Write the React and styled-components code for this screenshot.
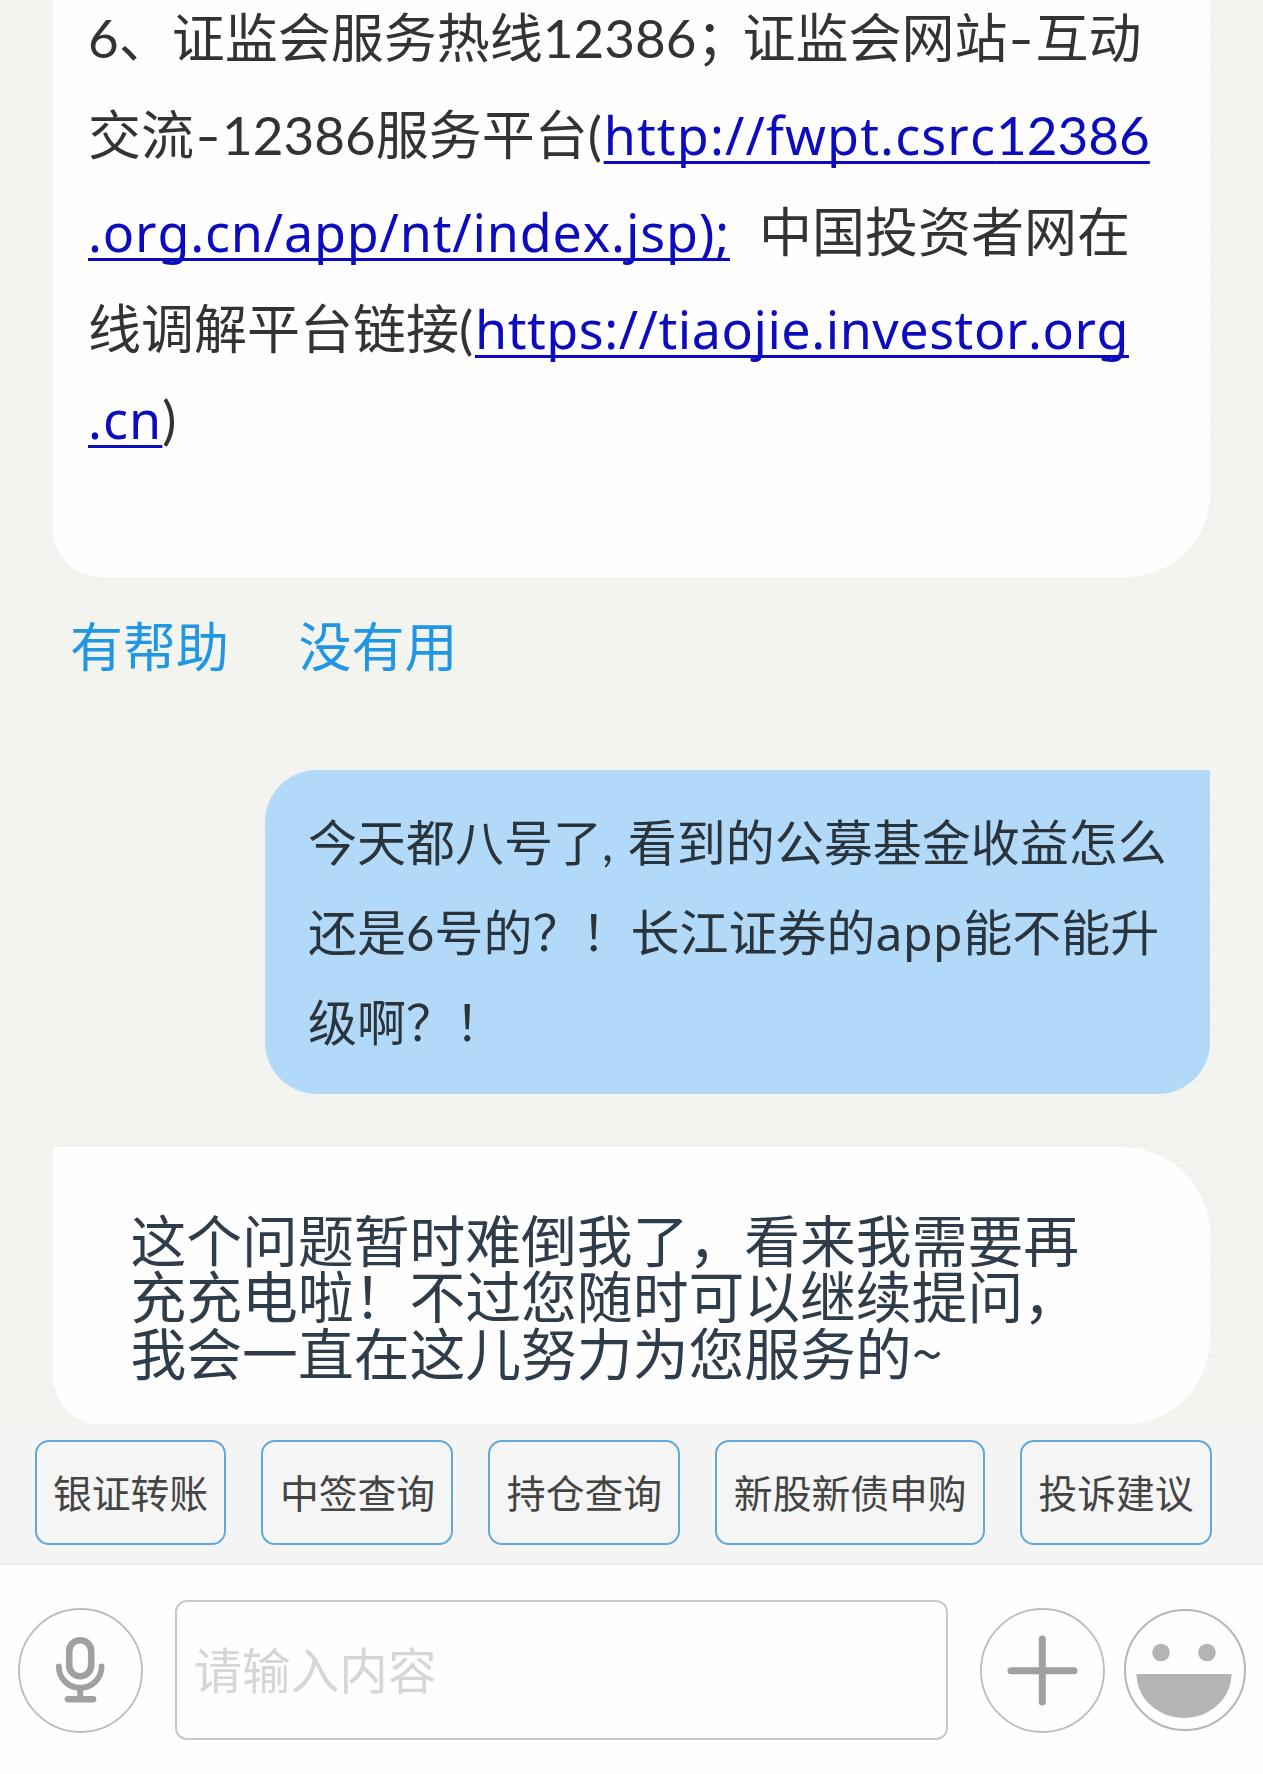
import React from "react";
import styled, { createGlobalStyle } from "styled-components";

const GlobalStyle = createGlobalStyle`
  * { box-sizing: border-box; }
  body {
    margin: 0;
    background: #fefefe;
    font-family: "Lato", "Noto Sans CJK SC", sans-serif;
    font-variant-ligatures: none;
    font-kerning: none;
    text-spacing-trim: space-all;
  }
`;

const Page = styled.div`
  display: flex;
  flex-direction: column;
  width: 1263px;
  height: 1774px;
  overflow: hidden;
`;

const Chat = styled.main`
  display: flex;
  flex-direction: column;
  flex: 0 0 1424px;
  padding: 0 53px;
  overflow: hidden;
  background:
    repeating-linear-gradient(180deg, rgba(255, 255, 255, 0.14) 0 2px, transparent 3px 7px),
    repeating-linear-gradient(180deg, rgba(222, 225, 212, 0.1) 0 1px, transparent 2px 5px),
    #f3f4ef;
`;

const Bubble = styled.section`
  color: #333;
  background: #fefefe;
  white-space: nowrap;
`;

const AnswerBubble = styled(Bubble)`
  flex: 0 0 588px;
  margin-top: -11px;
  padding-left: 35px;
  border-radius: 0 0 84px 48px;
  font-size: 53px;
`;

const QuestionBubble = styled(Bubble)`
  align-self: flex-end;
  width: 945px;
  flex: 0 0 324px;
  margin-top: 99px;
  padding: 27px 0 0 43px;
  border-radius: 52px 0 52px 52px;
  color: #2a343c;
  background: #b3d9f8;
  font-size: 49px;
`;

const FallbackBubble = styled(Bubble)`
  flex: 0 0 278px;
  margin-top: 53px;
  padding: 63px 0 0 77.5px;
  border-radius: 0 88px 88px 50px;
  color: #2f3c49;
  font-family: "Noto Sans CJK SC", sans-serif;
  font-size: 55.8px;
`;

const Line = styled.div`
  height: ${(p) => p.$height}px;
  line-height: ${(p) => p.$height}px;
`;

const Track = styled.span`
  letter-spacing: ${(p) => p.$by}px;
`;

const Latin = styled.span`
  font-family: "Noto Sans", sans-serif;
  font-size: 0.98em;
  line-height: 1;
  letter-spacing: 0.6px;
`;

const LinkDigits = styled.span`
  font-family: "Lato", sans-serif;
  font-size: 53px;
  letter-spacing: 0;
`;

const Dash = styled.span`
  display: inline-block;
  width: 28px;
  text-align: center;
  transform: scaleX(1.3);
`;

const Link = styled.a`
  color: #0c0cbe;
  font-family: "Noto Sans", sans-serif;
  font-size: 52px;
  line-height: 1;
  letter-spacing: ${(p) => p.$by}px;
  text-decoration: underline;
  text-decoration-thickness: 2.5px;
  text-decoration-skip-ink: none;
  text-underline-offset: 6px;
  margin-right: ${(p) => p.$after || 0}px;
`;

const Feedback = styled.div`
  display: flex;
  gap: 69.5px;
  margin-top: 41px;
  padding-left: 17px;
`;

const FeedbackButton = styled.button`
  padding: 0;
  border: 0;
  background: none;
  color: #2196e3;
  font: 53px/53px "Noto Sans CJK SC", sans-serif;
`;

const QuickBar = styled.nav`
  display: flex;
  gap: 35px;
  flex: 0 0 141px;
  padding: 16px 0 0 34.5px;
  border-bottom: 1px solid #e9e9e9;
  background: #f4f4f4;
`;

const QuickButton = styled.button`
  flex: 0 0 auto;
  height: 105px;
  padding: 0 16.4px 4px;
  border: 2px solid #63a8dc;
  border-radius: 14px;
  background: #f5f5f5;
  color: #444;
  font: 38.8px/96px "Noto Sans CJK SC", sans-serif;
  white-space: nowrap;
`;

const Composer = styled.footer`
  display: flex;
  align-items: center;
  flex: 1;
  padding: 1px 17px 0 18px;
  background: #fefefe;
`;

const Input = styled.input`
  width: 774px;
  height: 140px;
  margin: 0 32px 0 31.5px;
  padding: 0 17px 4px;
  border: 2px solid #c8c8c8;
  border-radius: 12px;
  background: #fefefe;
  font: 400 48.6px/70px "Noto Sans CJK SC", sans-serif;
  &::placeholder {
    color: #d6d6d6;
    opacity: 1;
  }
`;

const IconButton = styled.button`
  display: flex;
  flex: 0 0 auto;
  margin: 0 ${(p) => p.$after || 0}px 0 0;
  padding: 0;
  border: 0;
  background: none;
`;

const MicIcon = () => (
  <svg width="125" height="125" viewBox="0 0 125 125" fill="none">
    <circle cx="62.5" cy="62.5" r="61.5" stroke="#bcbcbc" strokeWidth="1.8" />
    <g stroke="#a0a0a0" strokeLinecap="round">
      <rect x="51.2" y="32.2" width="22" height="36" rx="11" strokeWidth="6.6" />
      <path d="M40.8 58.5a21.4 21.4 0 0 0 42.8 0" strokeWidth="5.8" />
      <path d="M62.2 81v9" strokeWidth="6" strokeLinecap="butt" />
      <path d="M50 91.2h25" strokeWidth="6.6" />
    </g>
  </svg>
);

const PlusIcon = () => (
  <svg width="125" height="125" viewBox="0 0 125 125" fill="none">
    <circle cx="62.5" cy="62.5" r="61.5" stroke="#bcbcbc" strokeWidth="1.8" />
    <path d="M62.3 31v63M31 62.7h63" stroke="#a0a0a0" strokeWidth="7" strokeLinecap="round" />
  </svg>
);

const SmileIcon = () => (
  <svg width="122" height="122" viewBox="0 0 122 122" fill="none">
    <circle cx="61" cy="61" r="60" stroke="#b6b6b6" strokeWidth="2" />
    <g fill="#b4b4b4">
      <circle cx="37" cy="43.5" r="8.8" />
      <circle cx="83" cy="43.5" r="8.8" />
      <path d="M12.5 65h95a47.5 44 0 0 1-95 0z" />
    </g>
  </svg>
);

const quickActions = ["银证转账", "中签查询", "持仓查询", "新股新债申购", "投诉建议"];

export default function App() {
  return (
    <Page>
      <GlobalStyle />
      <Chat>
        <AnswerBubble>
          <Line $height={97}>
            6、证监会服务热线12386<Track $by={-7}>；</Track>证监会网站<Dash>-</Dash>互动
          </Line>
          <Line $height={97}>
            交流<Dash>-</Dash>12386服务平台<Track $by={1.8}>(</Track>
            <Link $by={1.15}>http://fwpt.csrc<LinkDigits>12386</LinkDigits></Link>
          </Line>
          <Line $height={97}>
            <Link $by={0.84} $after={29}>.org.cn/app/nt/index.jsp);</Link>中国投资者网在
          </Line>
          <Line $height={97}>
            线调解平台链接<Track $by={1.8}>(</Track>
            <Link $by={0.54}>https://tiaojie.investor.org</Link>
          </Line>
          <Line $height={83}>
            <Link $by={1.1}>.cn</Link>)
          </Line>
        </AnswerBubble>
        <Feedback>
          <FeedbackButton>有帮助</FeedbackButton>
          <FeedbackButton>没有用</FeedbackButton>
        </Feedback>
        <QuestionBubble>
          <Line $height={90}>今天都八号了<Track $by={1}>, </Track>看到的公募基金收益怎么</Line>
          <Line $height={90}>还是6号的？！长江证券的<Latin>app</Latin>能不能升</Line>
          <Line $height={90}>级啊？！</Line>
        </QuestionBubble>
        <FallbackBubble>
          <Line $height={56.3}>这个问题暂时难倒我了，看来我需要再</Line>
          <Line $height={56.3}>充充电啦！不过您随时可以继续提问，</Line>
          <Line $height={56.3}>我会一直在这儿努力为您服务的~</Line>
        </FallbackBubble>
      </Chat>
      <QuickBar>
        {quickActions.map((label) => (
          <QuickButton key={label}>{label}</QuickButton>
        ))}
      </QuickBar>
      <Composer>
        <IconButton aria-label="语音"><MicIcon /></IconButton>
        <Input placeholder="请输入内容" />
        <IconButton aria-label="更多" $after={19}><PlusIcon /></IconButton>
        <IconButton aria-label="表情"><SmileIcon /></IconButton>
      </Composer>
    </Page>
  );
}
